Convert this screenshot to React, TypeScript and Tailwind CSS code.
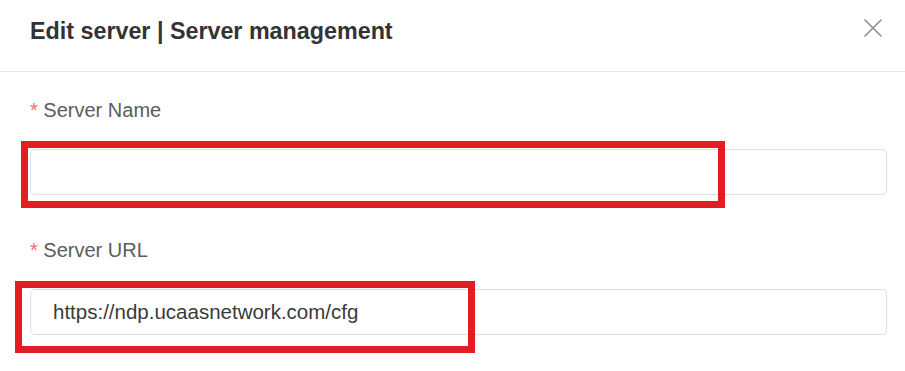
import React from "react";

function Field({ label, value, box }: { label: string; value?: string; box: { left: number; top: number; width: number; height: number } }) {
  return (
    <div className="flex flex-col">
      <label className="text-[20px] leading-[24px] text-[#5a5c60]">
        <span className="text-[#f56c6c]">*</span> {label}
      </label>
      <div className="relative mt-[27px]">
        <input
          readOnly
          value={value ?? ""}
          className="block h-[46px] w-full rounded-[5px] border border-[#dcdfe6] bg-white pl-[22px] text-[20.5px] text-[#3a3a3a] outline-none"
          style={{ fontFamily: '"Liberation Sans", Arial, sans-serif' }}
        />
        <div
          className="pointer-events-none absolute border-[7px] border-[#e41c24]"
          style={{ left: box.left, top: box.top, width: box.width, height: box.height }}
        />
      </div>
    </div>
  );
}

export default function App() {
  return (
    <div
      className="h-[371px] w-[905px] overflow-hidden bg-white"
      style={{ fontFamily: '"Liberation Sans", Arial, sans-serif' }}
    >
      <div className="flex h-[72px] items-start justify-between border-b border-[#e6e6e6] pl-[30px] pr-[22px] pt-[18px]">
        <h1 className="text-[23.3px] font-bold leading-[26px] text-[#333335]">Edit server | Server management</h1>
        <svg width="20" height="20" viewBox="0 0 20 20" fill="none" stroke="#8c8c8c" strokeWidth="1.6" strokeLinecap="round">
          <path d="M2 2 L18 18 M18 2 L2 18" />
        </svg>
      </div>
      <div className="flex flex-col gap-[43px] pl-[30px] pr-[18px] pt-[26px]">
        <Field label="Server Name" box={{ left: -9, top: -8, width: 704, height: 67 }} />
        <Field label="Server URL" value="https://ndp.ucaasnetwork.com/cfg" box={{ left: -15, top: -8, width: 460, height: 72 }} />
      </div>
    </div>
  );
}
